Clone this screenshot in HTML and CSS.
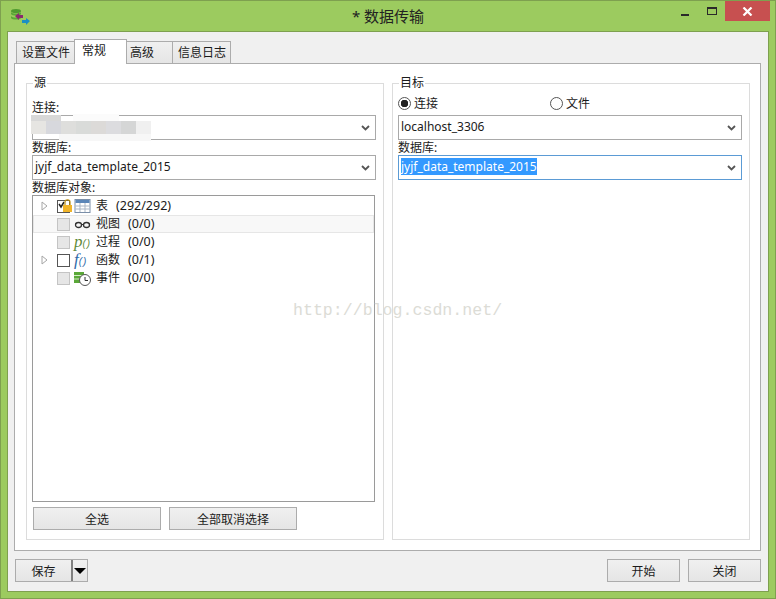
FILE: index.html
```html
<!DOCTYPE html>
<html lang="zh-CN">
<head>
    <meta charset="UTF-8">
    <link rel="stylesheet" href="styles.css">
    <title>* 数据传输</title>
</head>
<body>
    <div class="window">
        <div class="titlebar">
            <div class="app-icon">
                <svg width="20" height="20" viewBox="0 0 20 20">
                    <ellipse cx="6" cy="4" rx="5" ry="2" fill="#4f9a2f"/>
                    <path d="M1 5c1 2 9 2 10 0v2c-1 2-9 2-10 0zM1 9c1 2 9 2 10 0v2c-1 2-9 2-10 0z" fill="#5aa838"/>
                    <path d="M5 9l4-3v2h4v3H9v2z" fill="#8a2a6e"/>
                    <path d="M20 14l-4-3v2h-4v3h4v2z" fill="#1b8fc4"/>
                </svg>
            </div>
            <div class="title">* 数据传输</div>
            <div class="win-controls">
                <span class="win-min"></span>
                <span class="win-max"></span>
                <span class="win-close">
                    <svg width="11" height="9" viewBox="0 0 11 9"><path d="M1.5 .5l8 8M9.500 .5l-8 8" stroke="#fff" stroke-width="2.200" fill="none"/></svg>
                </span>
            </div>
        </div>

        <div class="content">
            <div class="tabs">
                <div class="tab tab-file">设置文件</div>
                <div class="tab active">常规</div>
                <div class="tab tab-adv">高级</div>
                <div class="tab tab-log">信息日志</div>
            </div>

            <div class="panel">
                <fieldset class="group">
                    <legend>源</legend>
                    <label class="field-label first">连接:</label>
                    <div class="combo">
                        <span class="mosaic">
                            <i class="m1"></i><i class="m2"></i><i class="m3"></i><i class="m4"></i><i class="m5"></i><i class="m6"></i><i class="m7"></i><i class="m8"></i>
                        </span>
                        <span class="smear-top"></span>
                        <span class="smear-left"></span>
                        <span class="smear-bottom"></span>
                        <svg class="chevron" width="9" height="6" viewBox="0 0 9 6"><path d="M1 1l3.500 3.500L8 1" stroke="#555" stroke-width="1.800" fill="none"/></svg>
                    </div>
                    <label class="field-label">数据库:</label>
                    <div class="combo">
                        <span class="combo-text">jyjf_data_template_2015</span>
                        <svg class="chevron" width="9" height="6" viewBox="0 0 9 6"><path d="M1 1l3.500 3.500L8 1" stroke="#555" stroke-width="1.800" fill="none"/></svg>
                    </div>
                    <label class="field-label">数据库对象:</label>
                    <div class="tree">
                        <div class="tree-row">
                            <svg class="arrow" width="7" height="10" viewBox="0 0 7 10"><path d="M1 1l5 4-5 4z" fill="#fff" stroke="#a6a6a6"/></svg>
                            <span class="check locked">
                                <svg width="16" height="15" viewBox="0 0 16 15">
                                    <path d="M1 6l2 3 3-5" stroke="#222" stroke-width="1.500" fill="none"/>
                                    <path d="M7 7V4c0-3 5-3 5 0v3" stroke="#b58a10" stroke-width="1.200" fill="none"/>
                                    <rect x="5" y="7" width="9" height="7" fill="#f0b429"/>
                                </svg>
                            </span>
                            <svg class="node-icon" width="16" height="14" viewBox="0 0 16 14">
                                <rect x=".5" y=".5" width="15" height="13" fill="#fff" stroke="#7a8ea8"/>
                                <rect x="1" y="1" width="14" height="3" fill="#5b86b8"/>
                                <path d="M1 7h14M1 10h14M5.500 4v9M10.500 4v9" stroke="#a9b5c4"/>
                            </svg>
                            <span class="node-text">表<span class="count">(292/292)</span></span>
                        </div>
                        <div class="tree-row selected">
                            <span class="arrow-gap"></span>
                            <span class="check off"></span>
                            <svg class="node-icon" width="16" height="14" viewBox="0 0 16 14">
                                <ellipse cx="4" cy="8" rx="3" ry="2.500" fill="none" stroke="#333" stroke-width="1.300"/>
                                <ellipse cx="12" cy="8" rx="3" ry="2.500" fill="none" stroke="#333" stroke-width="1.300"/>
                                <path d="M6.500 7.500h3M1 7l1-1M15 7l-1-1" stroke="#333"/>
                            </svg>
                            <span class="node-text">视图<span class="count">(0/0)</span></span>
                        </div>
                        <div class="tree-row">
                            <span class="arrow-gap"></span>
                            <span class="check off"></span>
                            <span class="node-icon func func-p"><b>p</b><em>()</em></span>
                            <span class="node-text">过程<span class="count">(0/0)</span></span>
                        </div>
                        <div class="tree-row">
                            <svg class="arrow" width="7" height="10" viewBox="0 0 7 10"><path d="M1 1l5 4-5 4z" fill="#fff" stroke="#a6a6a6"/></svg>
                            <span class="check"></span>
                            <span class="node-icon func func-f"><b>f</b><em>()</em></span>
                            <span class="node-text">函数<span class="count">(0/1)</span></span>
                        </div>
                        <div class="tree-row">
                            <span class="arrow-gap"></span>
                            <span class="check off"></span>
                            <svg class="node-icon" width="17" height="15" viewBox="0 0 17 15">
                                <path d="M0 1h10v11H0z" fill="#5aa838"/>
                                <path d="M0 4.500h10M0 8h10" stroke="#d6ecc6"/>
                                <circle cx="11" cy="9" r="5.500" fill="#fff" stroke="#555"/>
                                <path d="M11 6v3.500h3" stroke="#333" fill="none"/>
                            </svg>
                            <span class="node-text">事件<span class="count">(0/0)</span></span>
                        </div>
                    </div>
                    <div class="tree-buttons">
                        <button class="btn btn-wide">全选</button>
                        <button class="btn btn-wide">全部取消选择</button>
                    </div>
                </fieldset>

                <fieldset class="group">
                    <legend>目标</legend>
                    <div class="radios">
                        <span class="radio-item">
                            <span class="radio on"></span>连接
                        </span>
                        <span class="radio-item">
                            <span class="radio"></span>文件
                        </span>
                    </div>
                    <div class="combo">
                        <span class="combo-text">localhost_3306</span>
                        <svg class="chevron" width="9" height="6" viewBox="0 0 9 6"><path d="M1 1l3.500 3.500L8 1" stroke="#555" stroke-width="1.800" fill="none"/></svg>
                    </div>
                    <label class="field-label">数据库:</label>
                    <div class="combo focused">
                        <span class="combo-text highlight">jyjf_data_template_2015</span>
                        <svg class="chevron" width="9" height="6" viewBox="0 0 9 6"><path d="M1 1l3.500 3.500L8 1" stroke="#555" stroke-width="1.800" fill="none"/></svg>
                    </div>
                </fieldset>
            </div>

            <div class="footer">
                <button class="btn btn-save">
                    <span class="save-label">保存</span>
                    <span class="save-split"></span>
                    <span class="save-arrow"></span>
                </button>
                <div class="footer-right">
                    <button class="btn btn-foot">开始</button>
                    <button class="btn btn-foot">关闭</button>
                </div>
            </div>
        </div>

        <div class="watermark">http://blog.csdn.net/</div>
    </div>
</body>
</html>
```

FILE: styles.css
```css
* {
    box-sizing: border-box;
}

body {
    margin: 0;
    font-family: "Noto Sans", "Noto Sans CJK SC", sans-serif;
    font-size: 12px;
    color: #1a1a1a;
}

.window {
    position: relative;
    width: 776px;
    height: 599px;
    background-color: #9ccb5f;
    border: 1px solid #7ea04f;
    display: flex;
    flex-direction: column;
    overflow: hidden;
}

/* title bar */
.titlebar {
    height: 30px;
    flex-shrink: 0;
    display: grid;
    grid-template-columns: 1fr auto 1fr;
}

.app-icon {
    padding: 6px 0 0 9px;
}

.title {
    font-size: 15px;
    line-height: 20px;
    padding-top: 5px;
    color: #222;
}

.win-controls {
    display: flex;
    justify-content: flex-end;
    align-items: flex-start;
    padding-right: 5px;
}

.win-min {
    width: 8px;
    height: 2px;
    margin: 13px 18px 0 0;
    background-color: #2a2a2a;
}

.win-max {
    width: 10px;
    height: 8px;
    margin: 6px 8px 0 0;
    border: 1px solid #2a2a2a;
    border-top-width: 2px;
}

.win-close {
    width: 45px;
    height: 20px;
    background-color: #c75050;
    display: flex;
    align-items: center;
    justify-content: center;
}

/* main area */
.content {
    flex: 1;
    margin: 0 6px 6px;
    background-color: #f0f0f0;
    border: 1px solid #7ea04f;
    padding: 7px 7px 9px 6px;
    display: flex;
    flex-direction: column;
}

.tabs {
    display: flex;
    align-items: flex-end;
    height: 24px;
    padding-left: 2px;
    position: relative;
    z-index: 1;
}

.tab {
    height: 22px;
    padding-left: 5px;
    border: 1px solid #acacac;
    border-bottom: none;
    margin-right: -1px;
    background: linear-gradient(#f0f0f0, #e5e5e5);
    line-height: 21px;
}

.tab.active {
    width: 53px;
    height: 25px;
    margin-bottom: -1px;
    background: #fff;
    padding-left: 7px;
    line-height: 21px;
    position: relative;
    z-index: 1;
}

.tab-file {
    width: 59px;
}

.tab-adv {
    width: 47px;
    padding-left: 3px;
}

.tab-log {
    width: 59px;
}

.panel {
    height: 488px;
    background-color: #fff;
    border: 1px solid #acacac;
    padding: 11px 10px 10px 11px;
    display: flex;
    gap: 8px;
}

.group {
    width: 358px;
    margin: 0;
    padding: 0 7px 0 5px;
    border: 1px solid #dcdcdc;
    min-width: 0;
}

.group legend {
    padding: 0 1px;
    margin-left: 1px;
    line-height: 16px;
}

.field-label {
    display: block;
    height: 15px;
    line-height: 15px;
}

.field-label.first {
    margin-top: 9px;
}

/* combos */
.combo {
    height: 25px;
    border: 1px solid #a9a9a9;
    background-color: #fff;
    padding: 0 2px;
    display: flex;
    align-items: center;
    justify-content: space-between;
    position: relative;
}

.combo-text {
    margin-top: -2px;
}

.group .chevron {
    margin: 0 3px 0 auto;
}

.combo.focused {
    border-color: #5b9bd5;
}

.highlight {
    background-color: #3399ff;
    color: #fff;
}

/* the blurred connection name */
.mosaic {
    position: absolute;
    left: -2px;
    top: 5px;
    display: flex;
}

.mosaic i {
    display: block;
    width: 15px;
    height: 13px;
}

.m1 { background-color: #e6e5e2; }
.m2 { background-color: #d7d8dd; }
.m3 { background-color: #dededc; }
.m4 { background-color: #d9dbd9; }
.m5 { background-color: #dcdad8; }
.m6 { background-color: #dcdcdf; }
.m7 { background-color: #d5d6d6; }
.m8 { background-color: #f0f0f0; }

.smear-top {
    position: absolute;
    left: 40px;
    top: -2px;
    width: 46px;
    height: 7px;
    background-color: #fbfbfb;
}

.smear-left {
    position: absolute;
    left: -2px;
    top: -1px;
    width: 30px;
    height: 6px;
    background-color: #d8d8d8;
}

.smear-bottom {
    position: absolute;
    left: 26px;
    top: 18px;
    width: 92px;
    height: 7px;
    background-color: #f7f7f7;
}

/* tree */
.tree {
    height: 307px;
    margin-right: 1px;
    border: 1px solid #9a9a9a;
    padding-top: 1px;
}

.tree-row {
    height: 18px;
    display: flex;
    align-items: center;
    padding-left: 8px;
}

.tree-row.selected {
    border: 1px solid #e6e6e6;
    background-color: #f8f8f8;
    padding-left: 7px;
}

.arrow,
.arrow-gap {
    width: 7px;
    flex-shrink: 0;
    margin-right: 9px;
}

.check {
    width: 13px;
    height: 13px;
    border: 1px solid #555;
    background-color: #fff;
    flex-shrink: 0;
    margin-right: 4px;
    position: relative;
}

.check.off {
    background-color: #e6e6e6;
    border-color: #c4c4c4;
}

.check.locked svg {
    position: absolute;
    left: 0;
    top: -3px;
}

.node-icon {
    width: 17px;
    flex-shrink: 0;
    margin-right: 5px;
}

.func {
    display: flex;
    align-items: baseline;
    font-family: "Liberation Serif", serif;
    font-style: italic;
}

.func b {
    font-size: 17px;
    font-weight: normal;
}

.func em {
    font-size: 10px;
    letter-spacing: 1px;
    font-family: "Liberation Sans", sans-serif;
    font-weight: 300;
}

.func-p {
    color: #5f8a3a;
}

.func-f {
    color: #2f6aa8;
}

.node-text {
    white-space: nowrap;
    margin-top: -2px;
}

.count {
    font-size: 12.5px;
    margin-left: 8px;
}

.tree-buttons {
    display: flex;
    gap: 8px;
    margin: 5px 0 0 1px;
}

/* buttons */
.btn {
    height: 23px;
    padding: 0;
    border: 1px solid #acacac;
    background: linear-gradient(#f0f0f0, #e5e5e5);
    font-family: inherit;
    font-size: 12px;
    color: #1a1a1a;
}

.btn-wide {
    width: 128px;
}

.footer {
    display: flex;
    justify-content: space-between;
    margin-top: 8px;
}

.footer-right {
    display: flex;
    gap: 8px;
}

.btn-foot {
    width: 73px;
}

.btn-save {
    width: 73px;
    display: flex;
    align-items: center;
    margin-left: 1px;
}

.save-label {
    width: 55px;
    text-align: center;
}

.save-split {
    width: 2px;
    height: 21px;
    background-color: #808080;
}

.save-arrow {
    margin-left: 1px;
    width: 0;
    height: 0;
    border-left: 6px solid transparent;
    border-right: 6px solid transparent;
    border-top: 6px solid #000;
}

/* radios */
.radios {
    display: flex;
    height: 24px;
    padding-top: 4px;
}

.radio-item {
    width: 152px;
    display: flex;
    align-items: center;
    gap: 3px;
    height: 16px;
}

.radio {
    width: 13px;
    height: 13px;
    border: 1px solid #555;
    border-radius: 50%;
    background-color: #fff;
    display: block;
}

.radio.on {
    background: radial-gradient(circle, #222 0 3.5px, #fff 4px);
}

.watermark {
    position: absolute;
    left: 292px;
    top: 300px;
    font-family: "Liberation Mono", monospace;
    font-size: 16.6px;
    color: #dcdcd6;
    pointer-events: none;
}
```
